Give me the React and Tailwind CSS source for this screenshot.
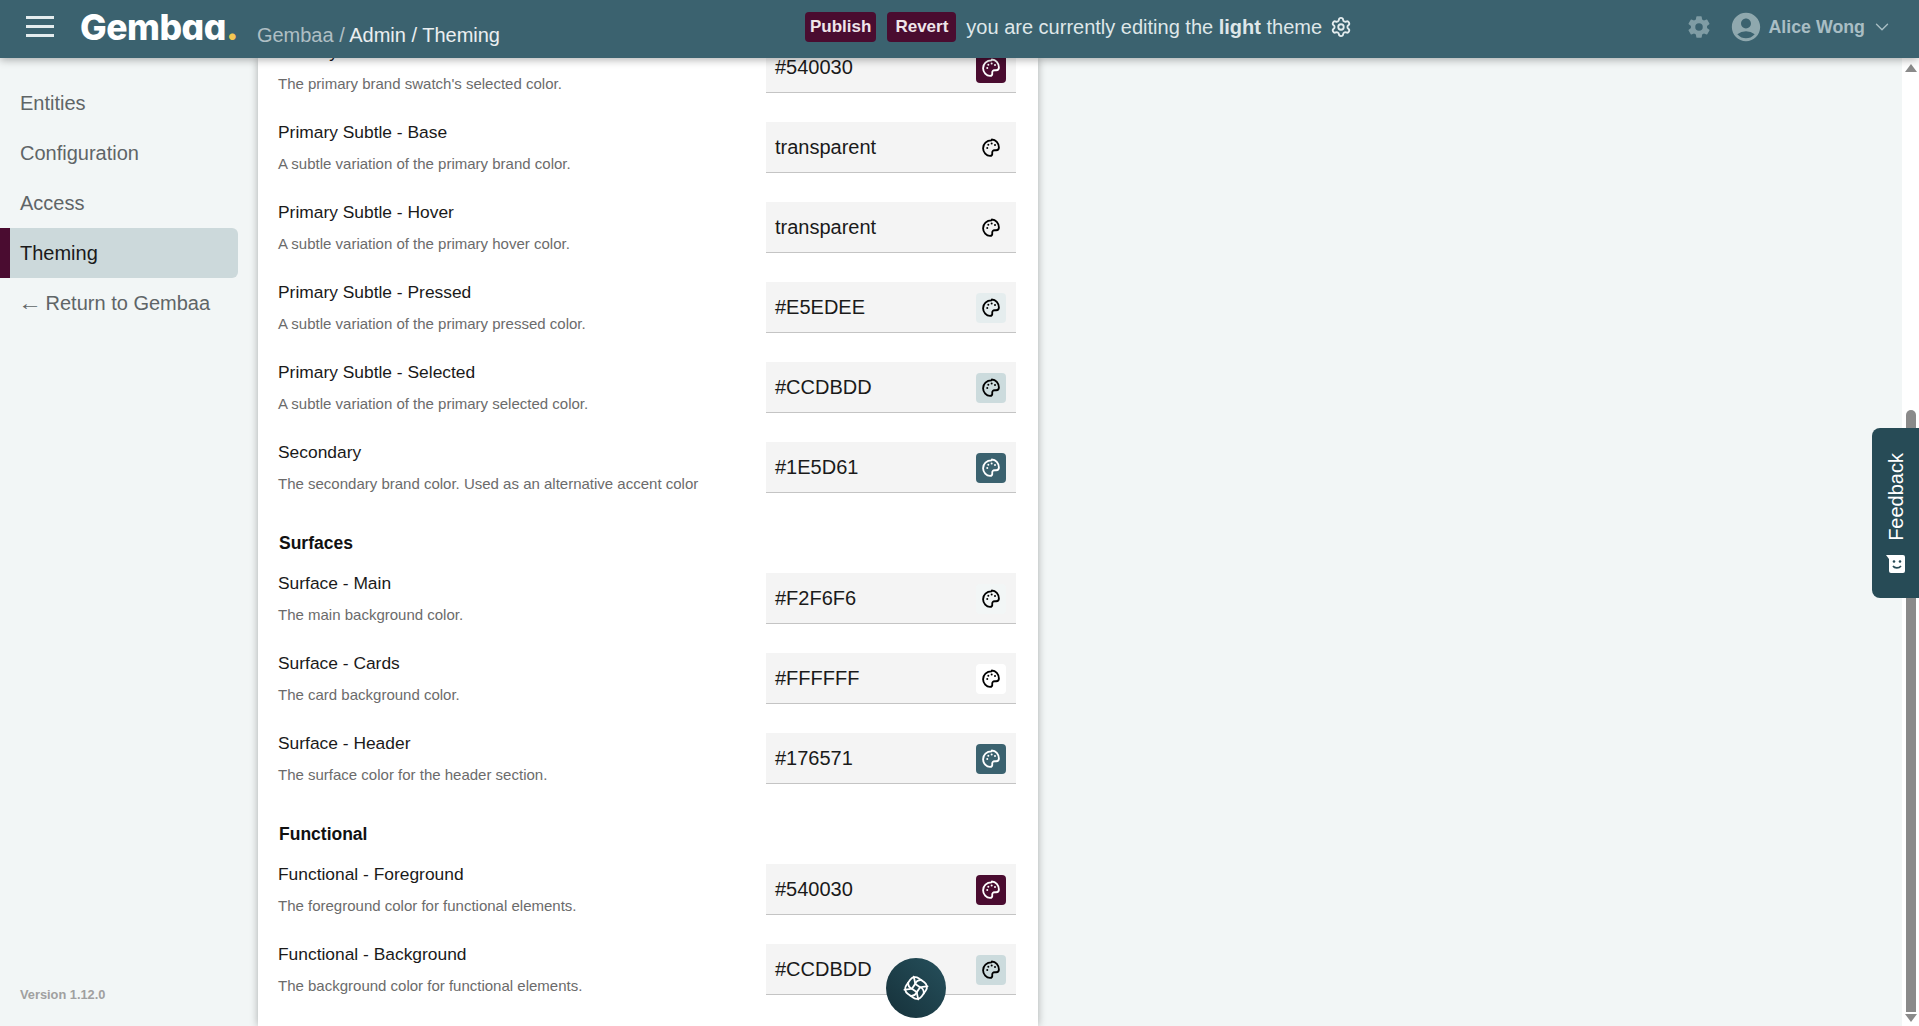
import React from "react";
import { ChevronDown, Settings } from "lucide-react";
import { MdAccountCircle } from "react-icons/md";
import { IoSettingsSharp } from "react-icons/io5";

const navItems = ["Entities", "Configuration", "Access"];

const sections = [
  {
    rows: [
      { label: "Primary - Selected", help: "The primary brand swatch's selected color.", value: "#540030", swatch: "bg-[#4a0c30] text-white" },
      { label: "Primary Subtle - Base", help: "A subtle variation of the primary brand color.", value: "transparent", swatch: "text-black" },
      { label: "Primary Subtle - Hover", help: "A subtle variation of the primary hover color.", value: "transparent", swatch: "text-black" },
      { label: "Primary Subtle - Pressed", help: "A subtle variation of the primary pressed color.", value: "#E5EDEE", swatch: "bg-[#e5edee] text-black" },
      { label: "Primary Subtle - Selected", help: "A subtle variation of the primary selected color.", value: "#CCDBDD", swatch: "bg-[#ccdbdd] text-black" },
      { label: "Secondary", help: "The secondary brand color. Used as an alternative accent color", value: "#1E5D61", swatch: "bg-[#3b626f] text-white" },
    ],
  },
  {
    title: "Surfaces",
    rows: [
      { label: "Surface - Main", help: "The main background color.", value: "#F2F6F6", swatch: "bg-[#f2f6f6] text-black" },
      { label: "Surface - Cards", help: "The card background color.", value: "#FFFFFF", swatch: "bg-white text-black" },
      { label: "Surface - Header", help: "The surface color for the header section.", value: "#176571", swatch: "bg-[#3b626f] text-white" },
    ],
  },
  {
    title: "Functional",
    rows: [
      { label: "Functional - Foreground", help: "The foreground color for functional elements.", value: "#540030", swatch: "bg-[#4a0c30] text-white" },
      { label: "Functional - Background", help: "The background color for functional elements.", value: "#CCDBDD", swatch: "bg-[#ccdbdd] text-black" },
    ],
  },
];

const PaletteIcon = () => (
  <svg width="20" height="20" viewBox="0 0 24 24" fill="none" stroke="currentColor" strokeWidth="2.2" strokeLinejoin="round">
    <path d="M12.500 2.800C6.800 2.800 2.500 6.800 2.500 12.200c0 5 4 9.300 8.300 9.300 2.200 0 2.900-1.500 2.700-3.200-.3-2.300.8-3.600 3-3.600h1.800c2 0 3.200-1.300 3.200-3.300 0-5.400-3.900-9.600-8.500-9.600z" />
    <circle cx="7.500" cy="12" r="1.200" fill="currentColor" stroke="none" />
    <circle cx="8.800" cy="8" r="1.200" fill="currentColor" stroke="none" />
    <circle cx="12.800" cy="6.500" r="1.200" fill="currentColor" stroke="none" />
    <circle cx="16.800" cy="8.500" r="1.200" fill="currentColor" stroke="none" />
  </svg>
);

const ColorRow = ({ label, help, value, swatch }) => (
  <div className="flex h-[80px] items-start justify-between">
    <div className="pl-[1px]">
      <div className="text-[17.4px] leading-[20px] text-[#1a1a1a]">{label}</div>
      <div className="mt-[13px] text-[15px] leading-[18px] text-[#6b6b6b]">{help}</div>
    </div>
    <div className="flex h-[51px] w-[250px] items-center justify-between border-b border-[#c4c4c4] bg-[#f4f4f4] pl-[9px] pr-[10px]">
      <span className="text-[20px] text-[#1a1a1a]">{value}</span>
      <span className={`mt-[2px] flex h-[30px] w-[30px] items-center justify-center rounded-[4px] ${swatch}`}>
        <PaletteIcon />
      </span>
    </div>
  </div>
);

const FeedbackIcon = () => (
  <svg width="20" height="20" viewBox="0 0 20 20">
    <path d="M0 1h17a2 2 0 0 1 2 2v14a2 2 0 0 1-2 2H5a2 2 0 0 1-2-2V5z" fill="#fff" />
    <circle cx="8" cy="7.500" r="1.300" fill="#274b56" />
    <circle cx="14" cy="7.500" r="1.300" fill="#274b56" />
    <path d="M7 12c1.500 2.500 6 2.500 8 0" stroke="#274b56" strokeWidth="1.600" fill="none" />
  </svg>
);

const OrbIcon = () => (
  <svg width="28" height="28" viewBox="0 0 28 28" fill="none" stroke="#fff" strokeWidth="1.800" strokeLinejoin="round" strokeLinecap="round">
    <g transform="rotate(35 14 14)">
      <rect x="4.500" y="4.500" width="19" height="19" rx="6" />
      <rect x="11" y="11" width="6" height="6" rx="1" />
      <path d="M11 11C9 9 7 7 5.500 6M17 11c2-2 4-4 5.500-5M17 17c2 2 4 4 5.500 5M11 17c-2 2-4 4-5.500 5" />
      <path d="M11 11c-.5-2 .5-5 3-6.500M17 11c2-.5 5 .5 6.500 3M17 17c.5 2-.5 5-3 6.500M11 17c-2 .5-5-.5-6.500-3" />
    </g>
  </svg>
);

export default function App() {
  return (
    <div className="relative flex h-screen flex-col overflow-hidden bg-[#f2f6f6] font-['Liberation_Sans',Arial,sans-serif]">
      <header className="relative z-10 flex h-[58px] shrink-0 items-center bg-[#3b626f] pb-[5px] pl-[26px] shadow-[0_2px_8px_rgba(0,0,0,0.3)]">
        <div className="flex w-[779px] items-center">
          <div className="flex w-[28px] flex-col gap-[6px]">
            <span className="h-[3px] bg-[#e4ecee]" />
            <span className="h-[3px] bg-[#e4ecee]" />
            <span className="h-[3px] bg-[#e4ecee]" />
          </div>
          <div className="ml-[26px] mt-[2px] font-['Inter',sans-serif] text-[35.5px] font-extrabold leading-none tracking-[-0.5px] text-white [font-feature-settings:'cv11']">
            Gembaa<span className="text-[#f4c752]">.</span>
          </div>
          <div className="ml-[19px] mt-[17px] text-[20px] text-white/90">
            <span className="text-white/60">Gembaa / </span>Admin / Theming
          </div>
        </div>
        <div className="flex items-center">
          <button className="rounded-[4px] bg-[#4a0c30] px-[5px] py-[5px] text-[17px] font-bold leading-[20px] text-[#efe5ea]">Publish</button>
          <button className="ml-[11px] rounded-[4px] bg-[#4a0c30] px-[8px] py-[5px] text-[17px] font-bold leading-[20px] text-[#efe5ea]">Revert</button>
          <span className="ml-[10px] text-[20px] text-[#dfe7e9]">
            you are currently editing the <b>light</b> theme
          </span>
          <Settings size={22} className="ml-[8px] text-[#e4ecee]" />
        </div>
        <div className="ml-auto flex items-center pr-[26px] text-[#a9bec4]">
          <IoSettingsSharp size={24} className="text-[#7f9ca4]" />
          <MdAccountCircle size={34} className="ml-[18px] text-[#8fa8ae]" />
          <span className="ml-[6px] mt-[1px] text-[17.8px] font-bold">Alice Wong</span>
          <ChevronDown size={22} strokeWidth={1.5} className="ml-[6px]" />
        </div>
      </header>

      <div className="flex min-h-0 flex-1">
        <aside className="flex w-[258px] shrink-0 flex-col pb-[22px] pt-[20px]">
          <nav className="flex flex-col text-[20px] text-[#5f6567]">
            {navItems.map((item) => (
              <a key={item} className="flex h-[50px] items-center pl-[20px]">{item}</a>
            ))}
            <a className="flex h-[50px] w-[238px] items-center rounded-r-[6px] border-l-[10px] border-[#4a0c30] bg-[#ccd9db] pl-[10px] text-[#1a1a1a]">Theming</a>
            <a className="flex h-[50px] items-center pl-[20px]">
              <span className="inline-block scale-x-[1.2]">←</span>&nbsp;Return to Gembaa
            </a>
          </nav>
          <div className="mt-auto pl-[20px] text-[12.8px] font-bold text-[#a0a0a0]">Version 1.12.0</div>
        </aside>

        <main className="w-[780px] shrink-0 overflow-hidden bg-white pl-[19px] pr-[22px] shadow-[0_0_8px_rgba(0,0,0,0.3)]">
          <div className="-mt-[16px]">
            {sections.map((section) => (
              <section key={section.title || "primary"}>
                {section.title && (
                  <h3 className="flex h-[51px] items-start pl-[2px] pt-[8px] text-[17.5px] font-bold text-[#111]">{section.title}</h3>
                )}
                {section.rows.map((row) => (
                  <ColorRow key={row.label} {...row} />
                ))}
              </section>
            ))}
          </div>
        </main>

        <div className="flex-1" />

        <div className="flex w-[17px] shrink-0 flex-col items-center bg-white">
          <span className="mt-[6px] h-0 w-0 border-x-[6px] border-b-[8px] border-x-transparent border-b-[#8a8a8a]" />
          <span className="mt-[338px] w-[10px] flex-1 rounded-t-[5px] bg-[#8a8a8a]" />
          <span className="mb-[4px] mt-[2px] h-0 w-0 border-x-[6px] border-t-[8px] border-x-transparent border-t-[#8a8a8a]" />
        </div>
      </div>

      <div className="absolute right-0 top-[428px] flex h-[170px] w-[47px] flex-col items-center rounded-l-[8px] bg-[#274b56] text-white">
        <span className="mt-[25px] [writing-mode:vertical-rl] rotate-180 whitespace-nowrap text-[20px] leading-none">Feedback</span>
        <span className="mt-[13px]"><FeedbackIcon /></span>
      </div>

      <button className="absolute left-[886px] top-[958px] flex h-[60px] w-[60px] items-center justify-center rounded-full bg-gradient-to-tr from-[#16313a] to-[#26505c]">
        <OrbIcon />
      </button>
    </div>
  );
}
